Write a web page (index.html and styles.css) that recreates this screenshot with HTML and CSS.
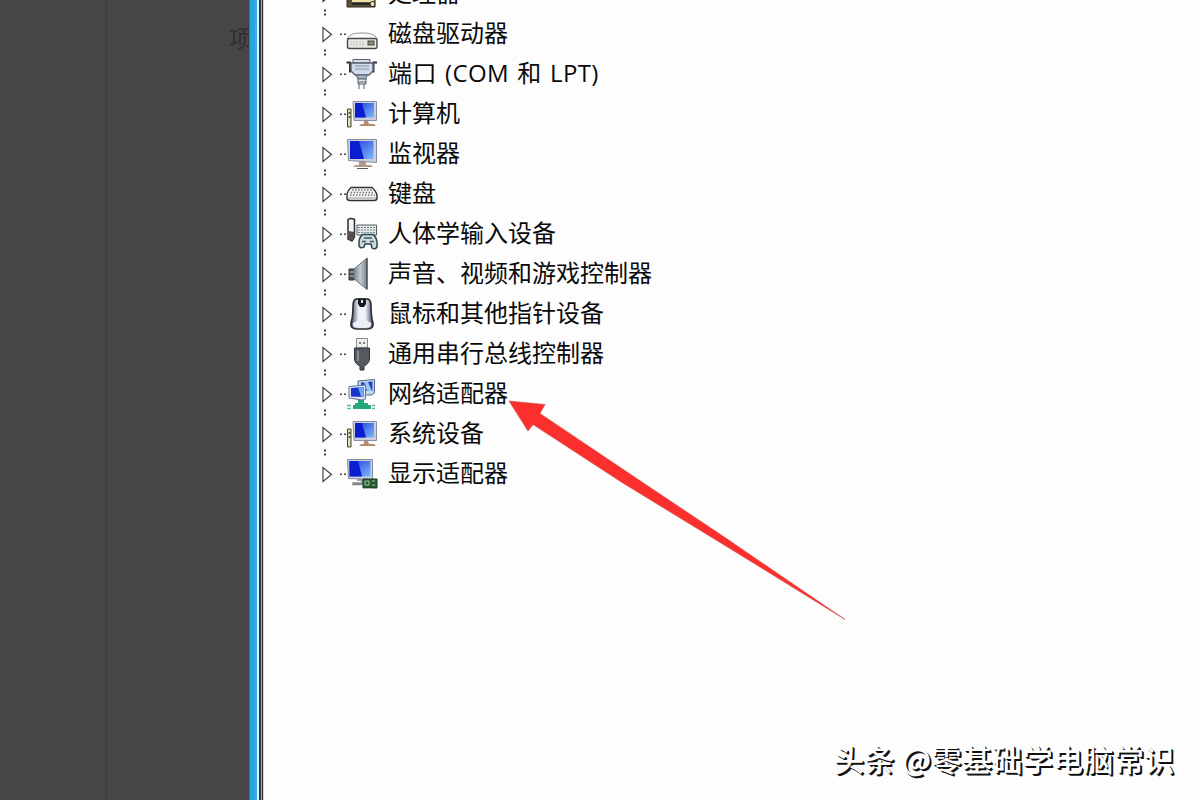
FILE: index.html
```
<!DOCTYPE html>
<html lang="zh-CN">

<head>
    <meta charset="UTF-8">
    <meta name="viewport" content="width=device-width, initial-scale=1.0">
    <title>设备管理器</title>
    <link rel="stylesheet" href="styles.css">
</head>

<body>
    <!-- 公用图形 -->
    <svg class="defs" width="0" height="0">
        <defs>
            <linearGradient id="screen" x1="0" y1="0" x2="1" y2="1">
                <stop offset="0" stop-color="#1c3fdc" />
                <stop offset="1" stop-color="#7fb6fa" />
            </linearGradient>
            <linearGradient id="metal" x1="0" y1="0" x2="1" y2="0">
                <stop offset="0" stop-color="#7b868f" />
                <stop offset=".5" stop-color="#c3cbd2" />
                <stop offset="1" stop-color="#7d8992" />
            </linearGradient>
            <linearGradient id="body" x1="0" y1="0" x2="1" y2="0">
                <stop offset="0" stop-color="#39445e" />
                <stop offset=".35" stop-color="#eef1f7" />
                <stop offset=".65" stop-color="#eef1f7" />
                <stop offset="1" stop-color="#39445e" />
            </linearGradient>
            <symbol id="expand" viewBox="0 0 24 40" overflow="visible">
                <path d="M3 13.5V27.5L11.5 20.5Z" fill="#fff" stroke="#444" stroke-width="1.2" />
                <path d="M4-4.500h2v2h-2zM4-.500h2v2h-2zM20 19.500h2v1.500h-2zM24 19.500h2v1.500h-2z" fill="#444" />
            </symbol>
            <symbol id="pc" viewBox="0 0 36 40">
                <path d="M9 7.5H32.5V26.5H10Z" fill="#ccd0dc" stroke="#8b8ea3" />
                <path d="M11 9H30V23.5H11Z" fill="url(#screen)" />
                <path d="M11 9H18L22 23.5H11Z" fill="#0a1ed0" />
                <path d="M20 27H24L25 30H30L32 32H15L17 30H20Z" fill="#b08c72" />
                <path d="M3.500 15H7V33H3.500Z" fill="#e0dfb8" stroke="#44443a" />
                <path d="M4.500 19H6.500M4.500 23H6.500" stroke="#333" stroke-width="1.500" />
            </symbol>
        </defs>
    </svg>

    <div class="page">
        <div class="mask">
            <div class="strip"></div>
            <div class="ghost">项</div>
        </div>
        <div class="border"></div>
        <div class="window">
            <ul>
                <li>
                    <svg class="arrow"><use href="#expand" /></svg>
                    <svg class="icon" viewBox="0 0 36 40">
                        <path d="M3 8H31V33H3Z" fill="#5a4d36" stroke="#2e291f" />
                        <path d="M8 10H30V29H8Z" fill="#f0dfa0" />
                        <path d="M8 29.500H26" stroke="#222" stroke-width="2.500" />
                        <circle cx="28.500" cy="30" r="2.500" fill="#eee3b4" stroke="#222" />
                    </svg>
                    <span>处理器</span>
                </li>
                <li>
                    <svg class="arrow"><use href="#expand" /></svg>
                    <svg class="icon" viewBox="0 0 36 40">
                        <path d="M3 25C6 20 10 19 18 19S31 20 33 25Z" fill="#fafafa" stroke="#929292" />
                        <rect x="3.500" y="24.500" width="29.500" height="10" rx="2" fill="#e9eae4" stroke="#484848" stroke-width="1.400" />
                        <path d="M7 27V32M10 27V32M13 27V32M16 27V32M19 27V32" stroke="#c2c2bc" />
                        <rect x="24" y="27" width="6" height="4" fill="#87906f" stroke="#444b38" />
                    </svg>
                    <span>磁盘驱动器</span>
                </li>
                <li>
                    <svg class="arrow"><use href="#expand" /></svg>
                    <svg class="icon" viewBox="0 0 36 40">
                        <path d="M2.500 8.500H6V18.500M33 8.500H29.500V18.500" fill="none" stroke="#2d3339" stroke-width="2" />
                        <path d="M9 5.500H26V9H9Z" fill="#d6dde6" stroke="#59616c" />
                        <path d="M7 9H29V17L25 21H11L7 17Z" fill="#cfdaea" stroke="#58616e" stroke-width="1.400" />
                        <path d="M11 12H25M11 15H25" stroke="#8291a8" />
                        <path d="M12 21H23L22 25H14Z" fill="#a7b3c1" stroke="#59636f" />
                        <path d="M14 25H22V30H14ZM15 30V35M20 30V35M14 28H22" fill="#e3e8ee" stroke="#56616b" />
                    </svg>
                    <span class="en">端口 (COM 和 LPT)</span>
                </li>
                <li>
                    <svg class="arrow"><use href="#expand" /></svg>
                    <svg class="icon"><use href="#pc" /></svg>
                    <span>计算机</span>
                </li>
                <li>
                    <svg class="arrow"><use href="#expand" /></svg>
                    <svg class="icon" viewBox="0 0 36 40">
                        <path d="M3.500 5.500H32.500V28.500L4.500 26.500Z" fill="#ccd0da" stroke="#8589a0" />
                        <path d="M6 7H29.500V25H6Z" fill="url(#screen)" />
                        <path d="M6 7H15L20 25H6Z" fill="#0a1ed0" />
                        <path d="M15 28H22V31H27L29 33H9L11 31H15Z" fill="#b39a83" />
                        <path d="M13 34.500H24" stroke="#655a52" />
                    </svg>
                    <span>监视器</span>
                </li>
                <li>
                    <svg class="arrow"><use href="#expand" /></svg>
                    <svg class="icon" viewBox="0 0 36 40">
                        <path d="M7 13.500H28C30 15 33 19 33 22V24Q33 26.500 30 26.500H6Q3 26.500 3 24V20Q4 16 7 13.500Z" fill="#f4f4f4" stroke="#303030" stroke-width="1.400" />
                        <path d="M8 16H28M6.500 18.500H30M6 21H31" stroke="#777" stroke-width="1.400" stroke-dasharray="1.500 1.500" />
                        <path d="M4 24H32" stroke="#999" />
                    </svg>
                    <span>键盘</span>
                </li>
                <li>
                    <svg class="arrow"><use href="#expand" /></svg>
                    <svg class="icon" viewBox="0 0 36 40">
                        <path d="M13 11H32.500V21H13Z" fill="#e1e9e9" stroke="#52605f" />
                        <path d="M14 13.500H32M14 16H32M14 18.500H32" stroke="#7c8b8a" stroke-dasharray="2 1" />
                        <path d="M4 5.500Q7 3.500 10.500 5.500V23L8 27L4 25Z" fill="#f1f3f4" stroke="#2a3034" stroke-width="1.500" />
                        <path d="M4.500 17L10.500 18V23L8 27L4.500 25Z" fill="#5a4b53" />
                        <path d="M19 20.500H29Q32 22 33 28V33Q31 36 28 34L27 30H21L20 33Q17 35 15 32V27Q16 22 19 20.500Z" fill="#c9dbdc" stroke="#304449" stroke-width="1.500" />
                        <path d="M20 24H28M18 27.500H22M26 27.500H30" stroke="#3d5d60" stroke-width="1.500" />
                    </svg>
                    <span>人体学输入设备</span>
                </li>
                <li>
                    <svg class="arrow"><use href="#expand" /></svg>
                    <svg class="icon" viewBox="0 0 36 40">
                        <path d="M5 15H10V26H5Z" fill="#4c5358" stroke="#2c3135" />
                        <path d="M10 15L22.500 4.500V35L10 25Z" fill="url(#metal)" stroke="#68727a" />
                        <path d="M23 4V35.500" stroke="#464d52" stroke-width="1.500" />
                        <path d="M5.500 18H10M5.500 22H10" stroke="#b7bfc4" />
                    </svg>
                    <span>声音、视频和游戏控制器</span>
                </li>
                <li>
                    <svg class="arrow"><use href="#expand" /></svg>
                    <svg class="icon" viewBox="0 0 36 40">
                        <path d="M12 5H24Q27 6 27 12C27 20 27 23 29 29Q30 35 23 35H13Q6 35 7 29C9 23 9 20 9 12Q9 6 12 5Z" fill="url(#body)" stroke="#262a32" stroke-width="1.600" />
                        <path d="M14 4.500H22V10L20 13H16L14 10Z" fill="#151820" />
                        <path d="M17 6H19V9H17Z" fill="#e9edf4" />
                        <path d="M9 29Q18 22 27 29Q28 33.500 23 33.500H13Q8 33.500 9 29Z" fill="#eceff5" />
                    </svg>
                    <span>鼠标和其他指针设备</span>
                </li>
                <li>
                    <svg class="arrow"><use href="#expand" /></svg>
                    <svg class="icon" viewBox="0 0 36 40">
                        <path d="M12.500 4.500H23.500V14H12.500Z" fill="#eee" stroke="#888" />
                        <path d="M15 8H17V10H15ZM19 8H21V10H19Z" fill="#777" />
                        <path d="M10.500 14H25.500V25Q25 30 20 32V36H16V32Q11 30 10.500 25Z" fill="#555a60" stroke="#2f3338" />
                        <path d="M14 17V27" stroke="#888e94" stroke-width="2" />
                    </svg>
                    <span>通用串行总线控制器</span>
                </li>
                <li>
                    <svg class="arrow"><use href="#expand" /></svg>
                    <svg class="icon" viewBox="0 0 36 40">
                        <path d="M14 7L30.500 5.500V19L27 21H14Z" fill="#cbd5e8" stroke="#536890" />
                        <path d="M17 8.500L28.500 7.500V17H17Z" fill="#1f45b8" />
                        <path d="M20 8H24L28 17H23Z" fill="#98c6f4" />
                        <path d="M5 12.500L21.500 11V25L18 26L5 24Z" fill="#dce4f3" stroke="#6273a0" />
                        <path d="M7 14L19.500 13V23L7 22.500Z" fill="#1733ce" />
                        <path d="M14 13.500L19.500 13V23L17 22.800Z" fill="#70a7f2" />
                        <path d="M14 26H20V29H24V31H27V35H9V31H11V29H14Z" fill="#24a779" />
                        <path d="M3 31.500H7M3 34.500H7M28 31.500H31M28 34.500H31" stroke="#60bd9a" stroke-width="1.500" />
                    </svg>
                    <span>网络适配器</span>
                </li>
                <li>
                    <svg class="arrow"><use href="#expand" /></svg>
                    <svg class="icon"><use href="#pc" /></svg>
                    <span>系统设备</span>
                </li>
                <li>
                    <svg class="arrow"><use href="#expand" /></svg>
                    <svg class="icon" viewBox="0 0 36 40">
                        <path d="M3.500 5.500H28.500V25.500L4.500 24.500Z" fill="#ccd0da" stroke="#8589a0" />
                        <path d="M5.500 7H26.500V22.500H5.500Z" fill="url(#screen)" />
                        <path d="M5.500 7H14L18 22.500H5.500Z" fill="#0a1ed0" />
                        <path d="M13 26H18V29H9V30.500H19" fill="none" stroke="#888" stroke-width="1.500" />
                        <path d="M19 25H33V34H19Z" fill="#235b35" stroke="#163b23" />
                        <path d="M21 27H25V31H21ZM28 27H31M28 31H31M20 34.500H29" fill="none" stroke="#a6c59a" />
                    </svg>
                    <span>显示适配器</span>
                </li>
            </ul>
        </div>
        <!-- 红色指示箭头 -->
        <svg class="pointer" viewBox="0 0 340 222">
            <path d="M1 1L37 4.500L32 13.500L125 76L217 137.500L337 219.500L217 145.500L114 82.500L25 24.500L20 31Z" fill="#fb302e" stroke="#d34842" stroke-width=".6" />
        </svg>
        <div class="author">头条 @零基础学电脑常识</div>
    </div>
</body>

</html>
```
FILE: styles.css
```
* {
    margin: 0;
    padding: 0;
    box-sizing: border-box;
}

body {
    background-color: #fdfdfd;
    font-family: "Open Sans", "Noto Sans CJK SC", sans-serif;
    color: #0a0a0a;
}

.defs {
    display: block;
}

.page {
    position: relative;
    display: flex;
    width: 1200px;
    height: 800px;
    overflow: hidden;
}

/* 左侧变暗的背景 */
.mask {
    display: flex;
    justify-content: space-between;
    width: 249px;
    background-color: #464646;
}

.strip {
    width: 107px;
    border-right: 1px solid #3c3c3c;
}

.ghost {
    width: 20px;
    padding-top: 22px;
    font-size: 24px;
    line-height: 34px;
    color: #303030;
}

.border {
    position: relative;
    width: 15px;
    background: linear-gradient(to right, #1d7fb2 0 1px, #27a4e2 1px 6px, #38b2ea 6px 8px, #d8f3ff 8px 10px, #26384a 10px 12px, #b9a5a9 12px 13px, #33292d 13px 14px, #d8d4d4 14px);
}

.window {
    flex: 1;
    background-color: #fdfdfd;
}

ul {
    margin-top: -26px;
    padding-left: 56px;
}

li {
    display: flex;
    height: 40px;
    line-height: 40px;
    list-style: none;
    font-size: 24px;
    white-space: nowrap;
}

.arrow {
    width: 24px;
    height: 40px;
    overflow: visible;
}

.icon {
    width: 36px;
    height: 40px;
    margin-right: 8px;
}

li span {
    height: 40px;
    line-height: 38px;
}

.en {
    letter-spacing: .4px;
    word-spacing: 1.6px;
}

.pointer {
    position: absolute;
    left: 508px;
    top: 400px;
    width: 340px;
    height: 222px;
}

/* 右下角署名，白字黑影 */
.author {
    position: absolute;
    left: 834px;
    top: 736px;
    font-family: "Noto Sans CJK SC", sans-serif;
    font-size: 30px;
    font-weight: 500;
    line-height: 44px;
    letter-spacing: .4px;
    color: #fff;
    text-shadow: 1px 1px 0 #111, 2px 2px 0 #111;
    white-space: nowrap;
}
```
